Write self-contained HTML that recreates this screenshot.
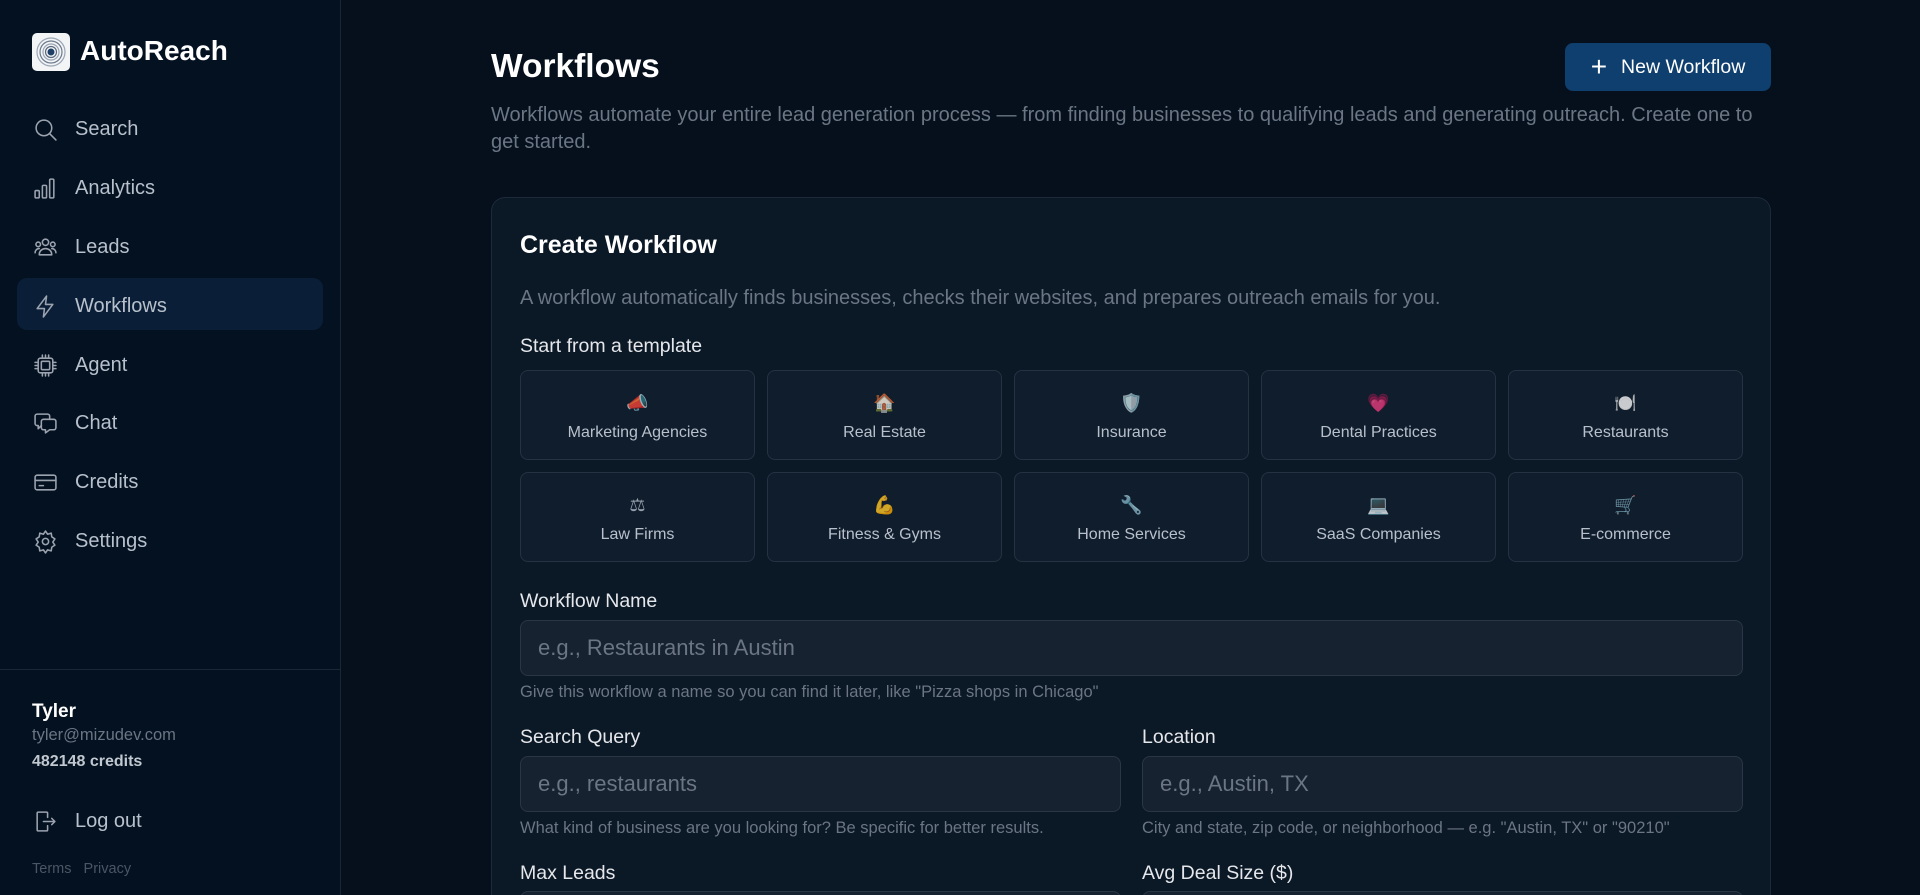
<!DOCTYPE html>
<html style="overflow:hidden;height:895px"><head><meta charset="utf-8"><style>
*{box-sizing:border-box;margin:0;padding:0}
body{width:1920px;height:895px;overflow:hidden;background:#05101c;font-family:"Liberation Sans","Noto Sans CJK SC",sans-serif;color:#e5e7eb;position:relative}
.sb{position:absolute;left:0;top:0;width:341px;height:895px;background:#031120;border-right:1px solid #1a2735}
.logo{position:absolute;left:32px;top:33px;width:38px;height:38px;background:#f3f4f6;border-radius:5px}
.brand{position:absolute;left:80px;top:35px;font-size:28px;font-weight:bold;color:#fff}
.nav{position:absolute;left:17px;width:306px;height:52px;border-radius:10px;display:flex;align-items:center;padding-left:16px;font-size:20px;color:#b8c0cc}
.nav svg{width:25px;height:25px;margin-right:17px;stroke:#9ca3af;fill:none;stroke-width:1.5;stroke-linecap:round;stroke-linejoin:round}
.nav.act{background:#0a1f37}
.foot{position:absolute;left:0;top:669px;width:340px;border-top:1px solid #1a2735}
.main{position:absolute;left:491px;top:0;width:1280px;height:895px;overflow:hidden}
h1{position:absolute;top:48px;left:0;font-size:33.5px;font-weight:bold;color:#fff}
.btn{position:absolute;left:1074px;top:43px;width:206px;height:48px;background:#0f3f6e;border-radius:8px;color:#fff;font-size:19.5px;display:flex;align-items:center;justify-content:center;gap:14px}
.sub{position:absolute;top:102px;left:0;width:1280px;font-size:20px;line-height:27px;color:#6b7685}
.card{position:absolute;left:0;top:197px;width:1280px;height:698px;overflow:hidden;background:#0b1826;border:1px solid #1d2a39;border-bottom:none;border-radius:14px 14px 0 0}
.in{position:absolute;left:28px;width:1223px}
.tg{position:absolute;left:28px;top:172px;display:grid;grid-template-columns:repeat(5,235px);gap:12px}
.t{height:90px;border:1px solid #243242;border-radius:8px;background:#101d2c;display:flex;flex-direction:column;align-items:center;justify-content:center;font-size:16px;color:#b8c0cc;padding-top:4px}
.t span{font-size:18px;margin-bottom:10px;height:22px;line-height:22px;opacity:.8}
.lab{font-size:19.5px;color:#e5e7eb}
.inp{position:absolute;height:56px;background:#162230;border:1px solid #2a3645;border-radius:8px;font-size:22px;color:#6b7583;padding-left:17px;display:flex;align-items:center}
.help{position:absolute;font-size:16.5px;color:#6b7583}
</style></head><body>
<div class="sb">
<div class="logo"><svg width="38" height="38" viewBox="0 0 38 38"><circle cx="19" cy="19" r="14" fill="none" stroke="#9aa5b4" stroke-width="1.2"/><circle cx="19" cy="19" r="11" fill="none" stroke="#6b7a8c" stroke-width="1.2"/><circle cx="19" cy="19" r="8" fill="none" stroke="#9aa5b4" stroke-width="1.2"/><circle cx="19" cy="19" r="5.5" fill="none" stroke="#5a6a7c" stroke-width="1.2"/><circle cx="19" cy="19" r="3.5" fill="#1f3f66"/></svg></div>
<div class="brand">AutoReach</div>
<div class="nav" style="top:103px"><svg viewBox="0 0 24 24"><circle cx="10.5" cy="10.5" r="7.5"/><path d="M16 16l6 6"/></svg>Search</div>
<div class="nav" style="top:162px"><svg viewBox="0 0 24 24"><rect x="2" y="14" width="4" height="7" rx="1"/><rect x="9" y="9" width="4" height="12" rx="1"/><rect x="16" y="3" width="4" height="18" rx="1"/></svg>Analytics</div>
<div class="nav" style="top:221px"><svg viewBox="0 0 24 24"><circle cx="12" cy="7" r="3"/><circle cx="5" cy="9" r="2.2"/><circle cx="19" cy="9" r="2.2"/><path d="M6 19c0-4 3-6 6-6s6 2 6 6zM2 17c0-2 1.5-4 4-4M22 17c0-2-1.5-4-4-4"/></svg>Leads</div>
<div class="nav act" style="top:278px;padding-top:4px"><svg viewBox="0 0 24 24"><path d="M13 2L4 14h7l-1 8 9-12h-7z"/></svg>Workflows</div>
<div class="nav" style="top:339px"><svg viewBox="0 0 24 24"><rect x="5" y="5" width="14" height="14" rx="2"/><rect x="8" y="8" width="8" height="8" rx="1"/><path d="M9 2v3M12 2v3M15 2v3M9 19v3M12 19v3M15 19v3M2 9h3M2 12h3M2 15h3M19 9h3M19 12h3M19 15h3"/></svg>Agent</div>
<div class="nav" style="top:397px"><svg viewBox="0 0 24 24"><path d="M16 8V5a2 2 0 00-2-2H4a2 2 0 00-2 2v7a2 2 0 002 2h1v3l3-3"/><path d="M8 10a2 2 0 012-2h10a2 2 0 012 2v6a2 2 0 01-2 2h-4l-4 3v-3h-2a2 2 0 01-2-2z"/></svg>Chat</div>
<div class="nav" style="top:456px"><svg viewBox="0 0 24 24"><rect x="2" y="5" width="20" height="14" rx="2"/><path d="M2 10h20M6 15h4"/></svg>Credits</div>
<div class="nav" style="top:515px"><svg viewBox="0 0 24 24"><circle cx="12" cy="12" r="3"/><path d="M12 2l2 3 3.5-1 .5 3.5 3 2-2 3 2 3-3 2-.5 3.5-3.5-1-2 3-2-3-3.5 1-.5-3.5-3-2 2-3-2-3 3-2 .5-3.5 3.5 1z"/></svg>Settings</div>
<div class="foot">
<div style="position:absolute;left:32px;top:31px;font-size:19px;font-weight:bold;color:#fff">Tyler</div>
<div style="position:absolute;left:32px;top:56px;font-size:16.5px;color:#6b7583">tyler@mizudev.com</div>
<div style="position:absolute;left:32px;top:83px;font-size:16px;font-weight:bold;color:#c2c8d0">482148 credits</div>
<div class="nav" style="left:17px;top:125px"><svg viewBox="0 0 24 24"><path d="M14 8V4a1 1 0 00-1-1H5a1 1 0 00-1 1v16a1 1 0 001 1h8a1 1 0 001-1v-4M10 12h11M18 9l3 3-3 3"/></svg>Log out</div>
<div style="position:absolute;left:32px;top:191px;font-size:14.5px;color:#4b5563">Terms&nbsp;&nbsp;&nbsp;Privacy</div>
</div>
</div>
<div class="main">
<h1>Workflows</h1>
<div class="btn"><span style="font-size:28px;font-weight:normal;line-height:1">+</span>New Workflow</div>
<div class="sub">Workflows automate your entire lead generation process — from finding businesses to qualifying leads and generating outreach. Create one to get started.</div>
<div class="card">
<div class="in" style="top:33px;font-size:25px;font-weight:bold;color:#fff">Create Workflow</div>
<div class="in" style="top:89px;font-size:20px;color:#6b7685">A workflow automatically finds businesses, checks their websites, and prepares outreach emails for you.</div>
<div class="in lab" style="top:137px">Start from a template</div>
<div class="tg">
<div class="t"><span>📣</span>Marketing Agencies</div>
<div class="t"><span>🏠</span>Real Estate</div>
<div class="t"><span>🛡️</span>Insurance</div>
<div class="t"><span>💗</span>Dental Practices</div>
<div class="t"><span>🍽️</span>Restaurants</div>
<div class="t"><span>⚖</span>Law Firms</div>
<div class="t"><span>💪</span>Fitness &amp; Gyms</div>
<div class="t"><span>🔧</span>Home Services</div>
<div class="t"><span>💻</span>SaaS Companies</div>
<div class="t"><span>🛒</span>E-commerce</div>
</div>
<div class="in lab" style="top:392px">Workflow Name</div>
<div class="inp" style="left:28px;top:422px;width:1223px">e.g., Restaurants in Austin</div>
<div class="help" style="left:28px;top:485px">Give this workflow a name so you can find it later, like "Pizza shops in Chicago"</div>
<div class="lab" style="position:absolute;left:28px;top:528px">Search Query</div>
<div class="lab" style="position:absolute;left:650px;top:528px">Location</div>
<div class="inp" style="left:28px;top:558px;width:601px">e.g., restaurants</div>
<div class="inp" style="left:650px;top:558px;width:601px">e.g., Austin, TX</div>
<div class="help" style="left:28px;top:621px">What kind of business are you looking for? Be specific for better results.</div>
<div class="help" style="left:650px;top:621px">City and state, zip code, or neighborhood — e.g. "Austin, TX" or "90210"</div>
<div class="lab" style="position:absolute;left:28px;top:664px">Max Leads</div>
<div class="lab" style="position:absolute;left:650px;top:664px">Avg Deal Size ($)</div>
<div class="inp" style="left:28px;top:693px;width:601px"></div>
<div class="inp" style="left:650px;top:693px;width:601px"></div>
</div>
</div>
</body></html>
